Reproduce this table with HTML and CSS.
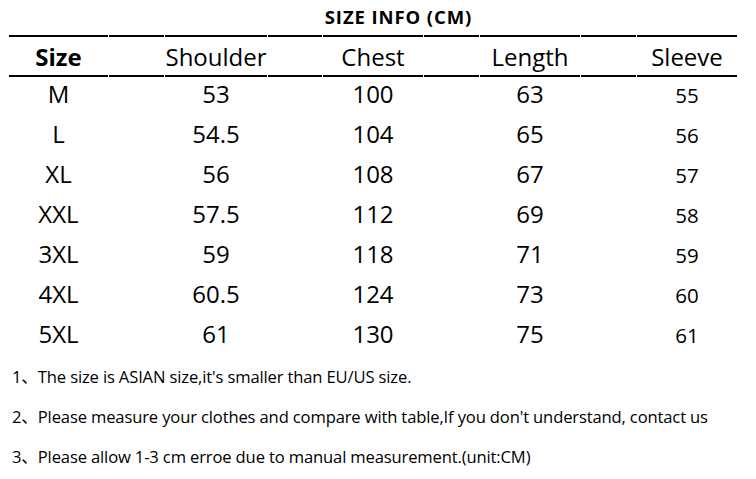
FILE: index.html
```html
<!DOCTYPE html>
<html lang="en">
<head>
<meta charset="utf-8">
<title>Size Info</title>
<link rel="stylesheet" href="styles.css">
</head>
<body>
<div class="page">
  <h1 class="title">SIZE INFO (CM)</h1>
  <table class="size-table">
    <colgroup>
      <col class="c-main" style="width:99px"><col class="c-sp" style="width:55px">
      <col style="width:102px"><col style="width:54px">
      <col style="width:100px"><col style="width:55px">
      <col style="width:100px"><col style="width:55px">
      <col style="width:100px">
    </colgroup>
    <thead>
      <tr>
        <th class="size-h">Size</th><th></th>
        <th>Shoulder</th><th></th>
        <th>Chest</th><th></th>
        <th>Length</th><th></th>
        <th>Sleeve</th>
      </tr>
    </thead>
    <tbody>
      <tr><td>M</td><td></td><td>53</td><td></td><td>100</td><td></td><td>63</td><td></td><td class="small">55</td></tr>
      <tr><td>L</td><td></td><td>54.5</td><td></td><td>104</td><td></td><td>65</td><td></td><td class="small">56</td></tr>
      <tr><td>XL</td><td></td><td>56</td><td></td><td>108</td><td></td><td>67</td><td></td><td class="small">57</td></tr>
      <tr><td>XXL</td><td></td><td>57.5</td><td></td><td>112</td><td></td><td>69</td><td></td><td class="small">58</td></tr>
      <tr><td>3XL</td><td></td><td>59</td><td></td><td>118</td><td></td><td>71</td><td></td><td class="small">59</td></tr>
      <tr><td>4XL</td><td></td><td>60.5</td><td></td><td>124</td><td></td><td>73</td><td></td><td class="small">60</td></tr>
      <tr><td>5XL</td><td></td><td>61</td><td></td><td>130</td><td></td><td>75</td><td></td><td class="small">61</td></tr>
    </tbody>
  </table>
  <ol class="notes">
    <li>1、The size is ASIAN size,it's smaller than EU/US size.</li>
    <li>2、Please measure your clothes and compare with table,If you don't understand, contact us</li>
    <li>3、Please allow 1-3 cm erroe due to manual measurement.(unit:CM)</li>
  </ol>
</div>
</body>
</html>
```

FILE: styles.css
```css
html, body {
  margin: 0;
  padding: 0;
  background: #fff;
}
body {
  font-family: "Open Sans", "Noto Sans", "Noto Sans CJK SC", sans-serif;
  color: #000;
  width: 756px;
  height: 479px;
  overflow: hidden;
}
.page {
  display: flex;
  flex-direction: column;
}
.title {
  margin: 0;
  height: 35px;
  line-height: 34px;
  font-size: 18.5px;
  font-weight: 700;
  letter-spacing: 0.9px;
  text-align: center;
  padding-left: 41px;
  width: 715px;
}
.size-table {
  margin-left: 8px;
  border-collapse: separate;
  border-spacing: 1px 0;
  table-layout: fixed;
  width: 730px;
}
.size-table th {
  height: 38px;
  padding: 0;
  border-top: 2px solid #000;
  border-bottom: 2px solid #000;
  font-size: 24px;
  font-weight: 400;
  text-align: center;
  vertical-align: middle;
}
.size-table th.size-h {
  font-weight: 700;
}
.size-table td {
  height: 40px;
  padding: 0;
  font-size: 24px;
  text-align: center;
  vertical-align: baseline;
}
.size-table td.small {
  font-size: 20.5px;
}
.notes {
  list-style: none;
  margin: 0;
  padding: 0 0 0 12px;
}
.notes li {
  height: 40px;
  line-height: 40px;
  font-size: 16.6px;
  letter-spacing: -0.15px;
}
```
